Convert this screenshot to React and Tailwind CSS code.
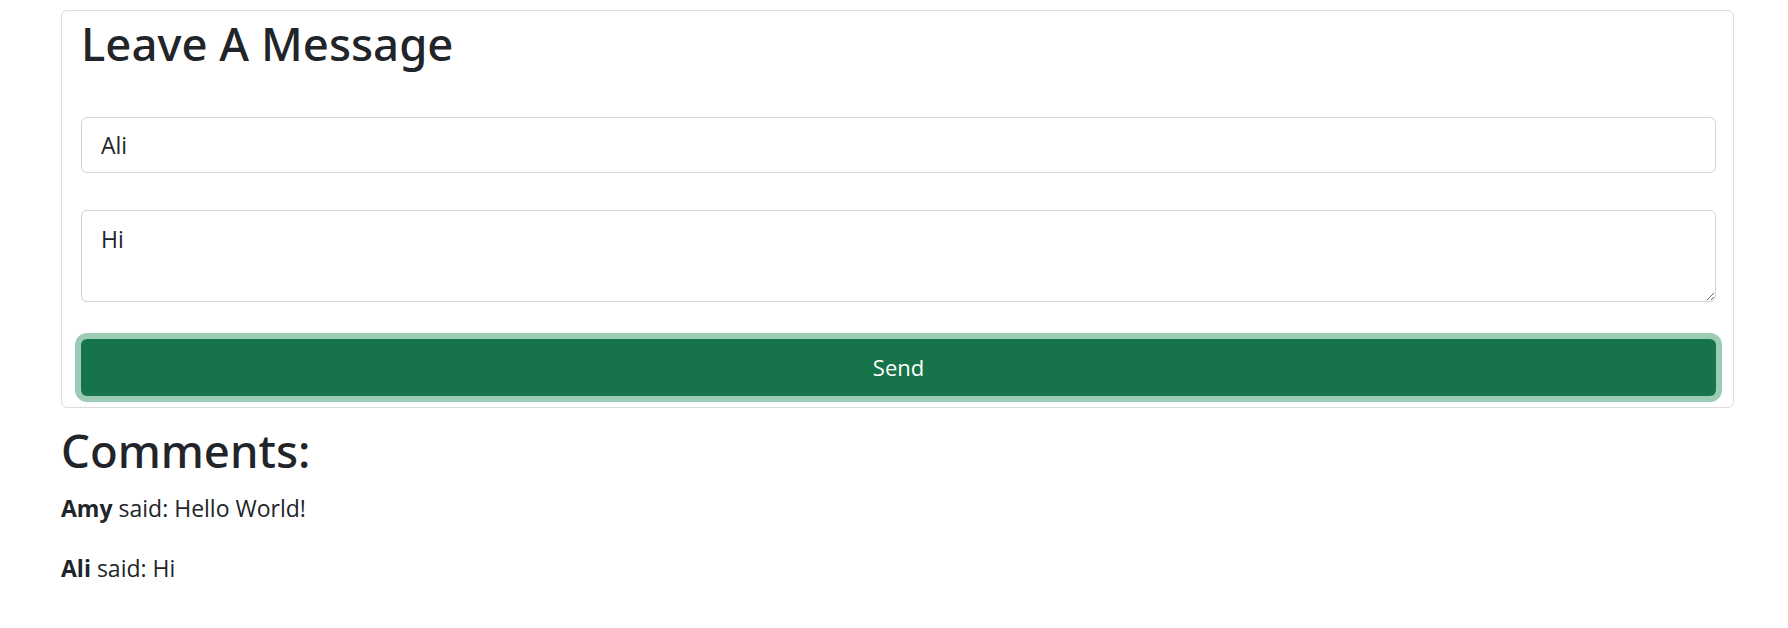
import React, { useState } from "react";

const font = { fontFamily: '"Open Sans", "Noto Sans", sans-serif' };
const headFont = { fontFamily: '"Noto Sans", "Open Sans", sans-serif' };

export default function App() {
  const [name, setName] = useState("Ali");
  const [message, setMessage] = useState("Hi");

  const comments = [
    { author: "Amy", text: "Hello World!" },
    { author: "Ali", text: "Hi" },
  ];

  return (
    <main className="min-h-screen bg-white text-[#212529]" style={font}>
      <div className="pt-[10px] pl-[61px] w-[1734px]">
        {/* Message form card */}
        <div className="border border-[#dcdcdc] rounded-[6px] pl-[19px] pr-[17px] pt-[5px] pb-[11px]">
          <h1 className="text-[45.5px] leading-[55px] font-medium" style={headFont}>
            Leave A Message
          </h1>

          <input
            className="mt-[46px] block w-full h-[56px] px-[19px] text-[23px] border border-[#ced4da] rounded-[6px] outline-none"
            value={name}
            onChange={(e) => setName(e.target.value)}
          />

          <textarea
            className="mt-[37px] block w-full h-[92px] px-[19px] py-[11px] text-[23px] leading-[34.5px] border border-[#ced4da] rounded-[6px] outline-none"
            value={message}
            onChange={(e) => setMessage(e.target.value)}
          />

          <button className="mt-[37px] block w-full h-[57px] bg-[#177349] text-white text-[22px] rounded-[6px] shadow-[0_0_0_6px_#9dccb6]">
            Send
          </button>
        </div>

        {/* Comments */}
        <h2 className="mt-[15px] text-[45.5px] leading-[55px] font-medium" style={headFont}>
          Comments:
        </h2>
        <div className="mt-[13px]">
          {comments.map((c, i) => (
            <p key={i} className={"text-[23px] leading-[34.5px] " + (i > 0 ? "mt-[25px]" : "")}>
              <b className="font-bold">{c.author}</b> said: {c.text}
            </p>
          ))}
        </div>
      </div>
    </main>
  );
}
